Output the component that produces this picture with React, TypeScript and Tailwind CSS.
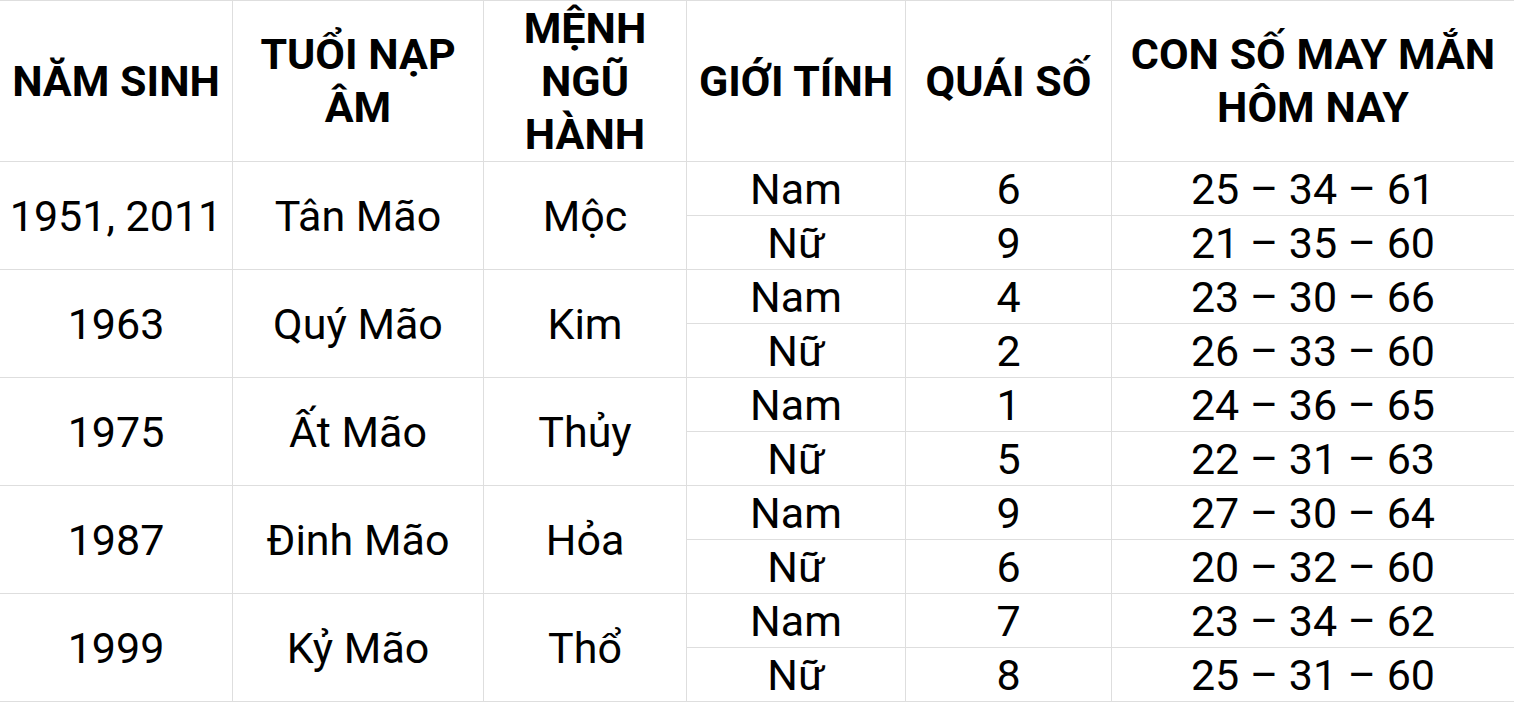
import React from 'react';

type Row = { nam: string; quai: string; so: string };
type Group = { year: string; tuoi: string; menh: string; rows: Row[] };

const groups: Group[] = [
  {
    year: '1951, 2011',
    tuoi: 'Tân Mão',
    menh: 'Mộc',
    rows: [
      { nam: 'Nam', quai: '6', so: '25 – 34 – 61' },
      { nam: 'Nữ', quai: '9', so: '21 – 35 – 60' },
    ],
  },
  {
    year: '1963',
    tuoi: 'Quý Mão',
    menh: 'Kim',
    rows: [
      { nam: 'Nam', quai: '4', so: '23 – 30 – 66' },
      { nam: 'Nữ', quai: '2', so: '26 – 33 – 60' },
    ],
  },
  {
    year: '1975',
    tuoi: 'Ất Mão',
    menh: 'Thủy',
    rows: [
      { nam: 'Nam', quai: '1', so: '24 – 36 – 65' },
      { nam: 'Nữ', quai: '5', so: '22 – 31 – 63' },
    ],
  },
  {
    year: '1987',
    tuoi: 'Đinh Mão',
    menh: 'Hỏa',
    rows: [
      { nam: 'Nam', quai: '9', so: '27 – 30 – 64' },
      { nam: 'Nữ', quai: '6', so: '20 – 32 – 60' },
    ],
  },
  {
    year: '1999',
    tuoi: 'Kỷ Mão',
    menh: 'Thổ',
    rows: [
      { nam: 'Nam', quai: '7', so: '23 – 34 – 62' },
      { nam: 'Nữ', quai: '8', so: '25 – 31 – 60' },
    ],
  },
];

const th = 'border border-[#dedede] px-0 py-0 text-center align-middle font-bold leading-[53px]';
const td = 'border border-[#dedede] p-0 text-center align-middle font-normal leading-[50px]';

export default function App() {
  return (
    <div className="w-[1514px] h-[704px] overflow-hidden bg-white text-black font-['Roboto',sans-serif] text-[43px]">
      <table className="table-fixed border-collapse w-[1515px] -ml-px">
        <colgroup>
          <col className="w-[233px]" />
          <col className="w-[251px]" />
          <col className="w-[203px]" />
          <col className="w-[219px]" />
          <col className="w-[206px]" />
          <col className="w-[403px]" />
        </colgroup>
        <thead>
          <tr className="h-[161px]">
            <th className={th}>NĂM SINH</th>
            <th className={th}>
              TUỔI NẠP
              <br />
              ÂM
            </th>
            <th className={th}>
              MỆNH
              <br />
              NGŨ
              <br />
              HÀNH
            </th>
            <th className={th}>GIỚI TÍNH</th>
            <th className={th}>QUÁI SỐ</th>
            <th className={th}>
              CON SỐ MAY MẮN
              <br />
              HÔM NAY
            </th>
          </tr>
        </thead>
        <tbody>
          {groups.map((g) =>
            g.rows.map((r, i) => (
              <tr key={g.year + r.nam} className="h-[54px]">
                {i === 0 && (
                  <>
                    <td rowSpan={2} className={td}>{g.year}</td>
                    <td rowSpan={2} className={td}>{g.tuoi}</td>
                    <td rowSpan={2} className={td}>{g.menh}</td>
                  </>
                )}
                <td className={td}>{r.nam}</td>
                <td className={td}>{r.quai}</td>
                <td className={td}>{r.so}</td>
              </tr>
            ))
          )}
        </tbody>
      </table>
    </div>
  );
}
